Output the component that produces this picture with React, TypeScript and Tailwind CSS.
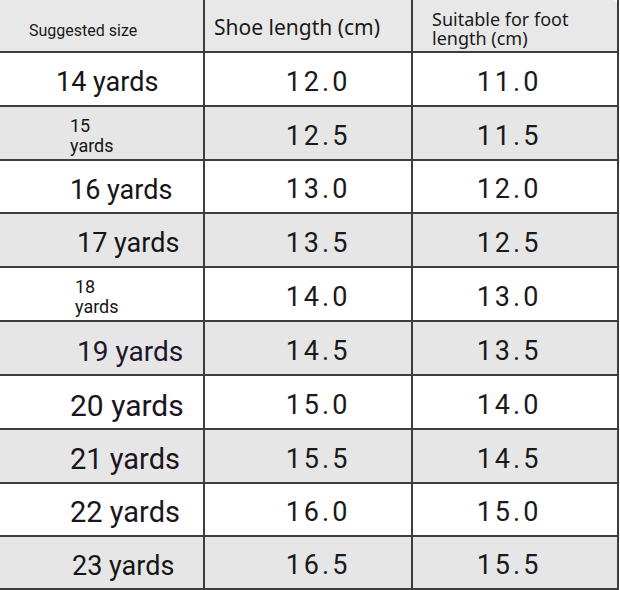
import React from 'react';

type Row = {
  size: string;
  shoe: string;
  foot: string;
  pl: string;
  cls: string;
  split?: boolean;
};

const rows: Row[] = [
  { size: '14 yards', shoe: '12.0', foot: '11.0', pl: 'pl-[56px]', cls: 'text-[27px] text-[#151515]' },
  { size: '15 yards', shoe: '12.5', foot: '11.5', pl: 'pl-[70px]', cls: 'text-[18px] text-[#151515]', split: true },
  { size: '16 yards', shoe: '13.0', foot: '12.0', pl: 'pl-[70px]', cls: 'text-[27px] text-[#151515]' },
  { size: '17 yards', shoe: '13.5', foot: '12.5', pl: 'pl-[77px]', cls: 'text-[27px] text-[#151515]' },
  { size: '18 yards', shoe: '14.0', foot: '13.0', pl: 'pl-[75px]', cls: 'text-[18px] text-[#151515]', split: true },
  { size: '19 yards', shoe: '14.5', foot: '13.5', pl: 'pl-[77px]', cls: 'text-[28px] text-[#22152a]' },
  { size: '20 yards', shoe: '15.0', foot: '14.0', pl: 'pl-[70px]', cls: 'text-[30px] text-[#1c1420]' },
  { size: '21 yards', shoe: '15.5', foot: '14.5', pl: 'pl-[70px]', cls: 'text-[29px] text-[#1c1420]' },
  { size: '22 yards', shoe: '16.0', foot: '15.0', pl: 'pl-[70px]', cls: 'text-[29px] text-[#1c1420]' },
  { size: '23 yards', shoe: '16.5', foot: '15.5', pl: 'pl-[72px]', cls: 'text-[27px] text-[#151515]' },
];

const heights = ['h-[54px]', 'h-[54px]', 'h-[53px]', 'h-[54px]', 'h-[54px]', 'h-[54px]', 'h-[54px]', 'h-[54px]', 'h-[53px]', 'h-[53px]'];

export default function App() {
  return (
    <div className="w-[620px] h-[590px] bg-white overflow-hidden font-['Roboto',sans-serif]">
      <div className="w-[619px] border-r-2 border-[#3d3d3d]">
        {/* header */}
        <div className="flex h-[53px] bg-[#e8e8e8] border-b-2 border-[#3d3d3d] rounded-tr-[4px]">
          <div className="w-[205px] border-r-2 border-[#3d3d3d] flex items-center pl-[29px] pt-[10px] text-[16px] text-[#1a1a1a]">
            Suggested size
          </div>
          <div className="w-[208px] border-r-2 border-[#3d3d3d] flex items-center pl-[9px] pt-[5px] text-[21px] text-[#1a1a1a] font-['Noto_Sans',sans-serif]">
            Shoe length (cm)
          </div>
          <div className="flex-1 pl-[19px] pt-[10px] text-[18px] leading-[19px] text-[#1a1a1a] font-['Noto_Sans',sans-serif]">
            Suitable for foot
            <br />
            length (cm)
          </div>
        </div>
        {rows.map((r, i) => (
          <div
            key={r.size}
            className={`flex ${heights[i]} border-b-2 border-[#3d3d3d] ${i % 2 === 0 ? 'bg-white' : 'bg-[#e6e6e6]'}`}
          >
            <div className={`w-[205px] border-r-2 border-[#3d3d3d] flex items-center ${r.pl} ${r.cls}`}>
              {r.split ? (
                <div className="leading-[20px] pt-[6px]">
                  {r.size.split(' ')[0]}
                  <br />
                  {r.size.split(' ')[1]}
                </div>
              ) : (
                <span className="pt-[7px]">{r.size}</span>
              )}
            </div>
            <div className="w-[208px] border-r-2 border-[#3d3d3d] flex items-center justify-center pl-[20px] pt-[6px] text-[27px] tracking-[3px] text-[#1a1a1a]">
              {r.shoe}
            </div>
            <div className="flex-1 flex items-center justify-center pr-[12px] pt-[6px] text-[27px] tracking-[3px] text-[#1a1a1a]">
              {r.foot}
            </div>
          </div>
        ))}
      </div>
    </div>
  );
}
